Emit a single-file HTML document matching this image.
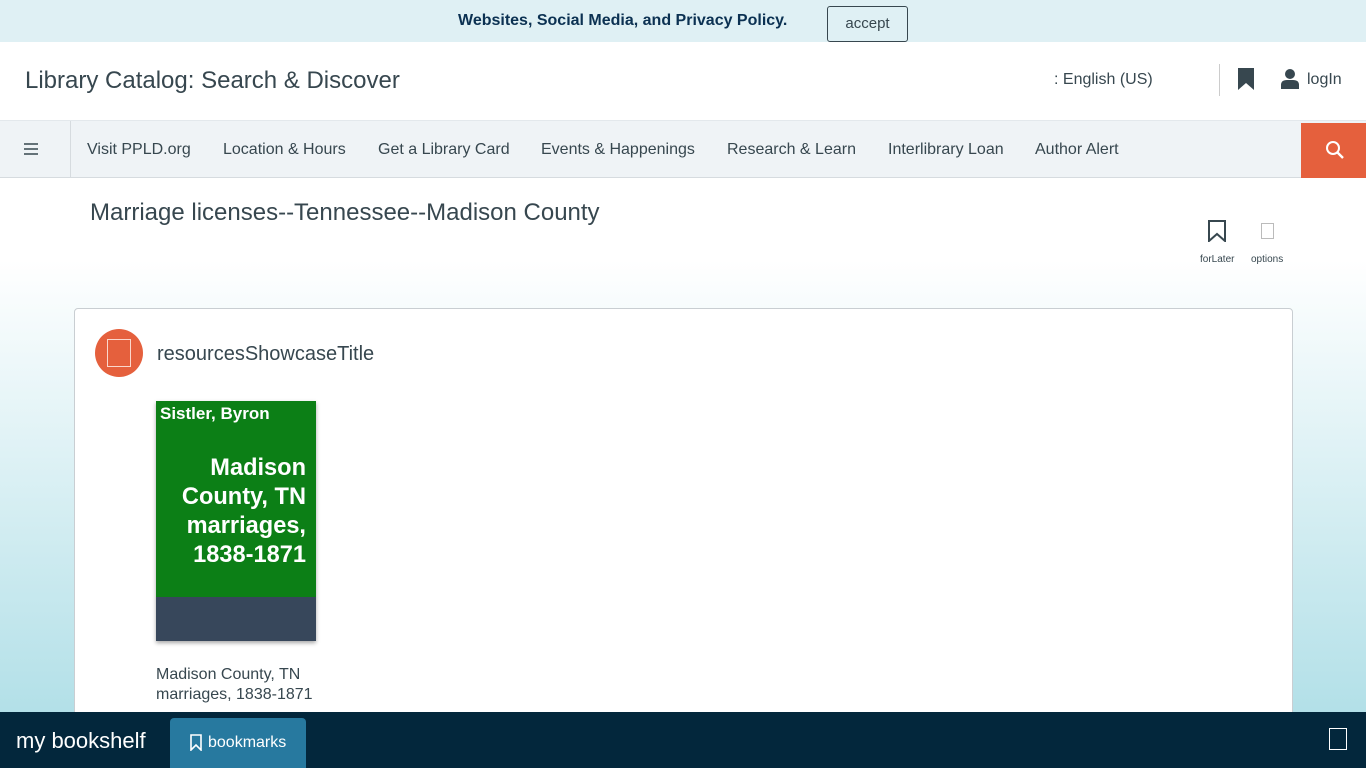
<!DOCTYPE html>
<html><head><style>
*{box-sizing:border-box;margin:0;padding:0}
body{width:1366px;height:768px;overflow:hidden;font-family:"Liberation Sans",Arial,sans-serif;color:#37474f;background:linear-gradient(#fff 0,#fff 260px,#a9dce5 768px);position:relative}
.banner{position:absolute;top:0;left:0;width:1366px;height:42px;background:#dff0f4}
.banner b{position:absolute;left:458px;top:12px;font-size:16px;color:#0b3152}
.banner .acc{position:absolute;left:827px;top:6px;width:81px;height:36px;border:1px solid #37474f;border-radius:3px;font-size:15px;text-align:center;line-height:34px;color:#37474f}
.hdr{position:absolute;top:42px;left:0;width:1366px;height:78px;background:#fff}
.hdr h1{position:absolute;left:25px;top:25px;font-weight:normal;font-size:24px;color:#37474f}
.nav{position:absolute;top:120px;left:0;width:1366px;height:58px;background:#eff3f6;border-top:1px solid #e3e8ec;border-bottom:1px solid #d6dbdf}
.nav span{position:absolute;top:20px;font-size:16px;color:#37474f}
.srch{position:absolute;right:0;top:2px;width:65px;height:55px;background:#e5603d}
.card{position:absolute;left:74px;top:308px;width:1219px;height:420px;background:#fff;border:1px solid #c9ced2;border-radius:4px}
.bar{position:absolute;left:0;top:712px;width:1366px;height:56px;background:#03273c}
</style></head><body>
<div class="banner"><b>Websites, Social Media, and Privacy Policy.</b><div class="acc">accept</div></div>
<div class="hdr"><h1>Library Catalog: Search &amp; Discover</h1>
<span style="position:absolute;left:1054px;top:29px;font-size:16px;color:#37474f">: English (US)</span>
<div style="position:absolute;left:1219px;top:22px;width:1px;height:32px;background:#ccc"></div>
<svg style="position:absolute;left:1238px;top:26px" width="16" height="22"><path d="M0 0H16V22L8 15L0 22Z" fill="#37474f"/></svg>
<svg style="position:absolute;left:1281px;top:27px" width="18" height="20"><circle cx="9" cy="5" r="5" fill="#37474f"/><path d="M0 20V16Q0 11 6 11H12Q18 11 18 16V20Z" fill="#37474f"/></svg>
<span style="position:absolute;left:1307px;top:29px;font-size:16px">logIn</span>
</div>
<div class="nav">
<svg style="position:absolute;left:24px;top:22px" width="14" height="12"><path d="M0 1H14M0 6H14M0 11H14" stroke="#37474f" stroke-width="1.6"/></svg>
<div style="position:absolute;left:70px;top:0;width:1px;height:57px;background:#d6dbdf"></div>
<span style="left:87px">Visit PPLD.org</span><span style="left:223px">Location &amp; Hours</span><span style="left:378px">Get a Library Card</span><span style="left:541px">Events &amp; Happenings</span><span style="left:727px">Research &amp; Learn</span><span style="left:888px">Interlibrary Loan</span><span style="left:1035px">Author Alert</span>
<div class="srch"><svg style="position:absolute;left:24px;top:17px" width="20" height="20"><circle cx="8" cy="8" r="6" fill="none" stroke="#fff" stroke-width="2"/><path d="M12.5 12.5L18 18" stroke="#fff" stroke-width="2.4"/></svg></div>
</div>
<div style="position:absolute;left:90px;top:199px;font-size:24px;color:#37474f">Marriage licenses--Tennessee--Madison County</div>
<svg style="position:absolute;left:1208px;top:220px" width="18" height="22"><path d="M1 1H17V21L9 14L1 21Z" fill="none" stroke="#37474f" stroke-width="2"/></svg>
<div style="position:absolute;left:1261px;top:223px;width:13px;height:16px;border:1px solid #bbb"></div>
<span style="position:absolute;left:1200px;top:254px;font-size:10px">forLater</span>
<span style="position:absolute;left:1251px;top:254px;font-size:10px">options</span>
<div class="card">
<div style="position:absolute;left:20px;top:20px;width:48px;height:48px;border-radius:50%;background:#e5603d"><div style="position:absolute;left:12px;top:10px;width:24px;height:28px;border:1px solid #fbd7cc"></div></div>
<span style="position:absolute;left:82px;top:34px;font-size:20px">resourcesShowcaseTitle</span>
<div style="position:absolute;left:81px;top:92px;width:160px;height:240px;box-shadow:0 2px 4px rgba(0,0,0,.35)">
<div style="height:196px;background:#0c7f16;color:#fff;font-weight:bold;position:relative">
<div style="position:absolute;left:4px;top:3px;font-size:17px">Sistler, Byron</div>
<div style="position:absolute;right:10px;top:53px;font-size:23.6px;text-align:right;line-height:29px;white-space:nowrap">Madison<br>County, TN<br>marriages,<br>1838-1871</div></div>
<div style="height:44px;background:#37475b"></div></div>
<div style="position:absolute;left:81px;top:356px;font-size:16px;line-height:20px;color:#37474f">Madison County, TN<br>marriages, 1838-1871</div>
</div>
<div class="bar">
<span style="position:absolute;left:16px;top:16px;font-size:22px;color:#fff">my bookshelf</span>
<div style="position:absolute;left:170px;top:6px;width:136px;height:50px;background:#27799f;border-radius:4px 4px 0 0">
<svg style="position:absolute;left:20px;top:16px" width="12" height="17"><path d="M1 1H11V16L6 11L1 16Z" fill="none" stroke="#fff" stroke-width="1.6"/></svg>
<span style="position:absolute;left:38px;top:16px;font-size:16px;color:#fff">bookmarks</span></div>
<div style="position:absolute;left:1329px;top:16px;width:18px;height:22px;border:1.5px solid #fff"></div>
</div>
</body></html>
